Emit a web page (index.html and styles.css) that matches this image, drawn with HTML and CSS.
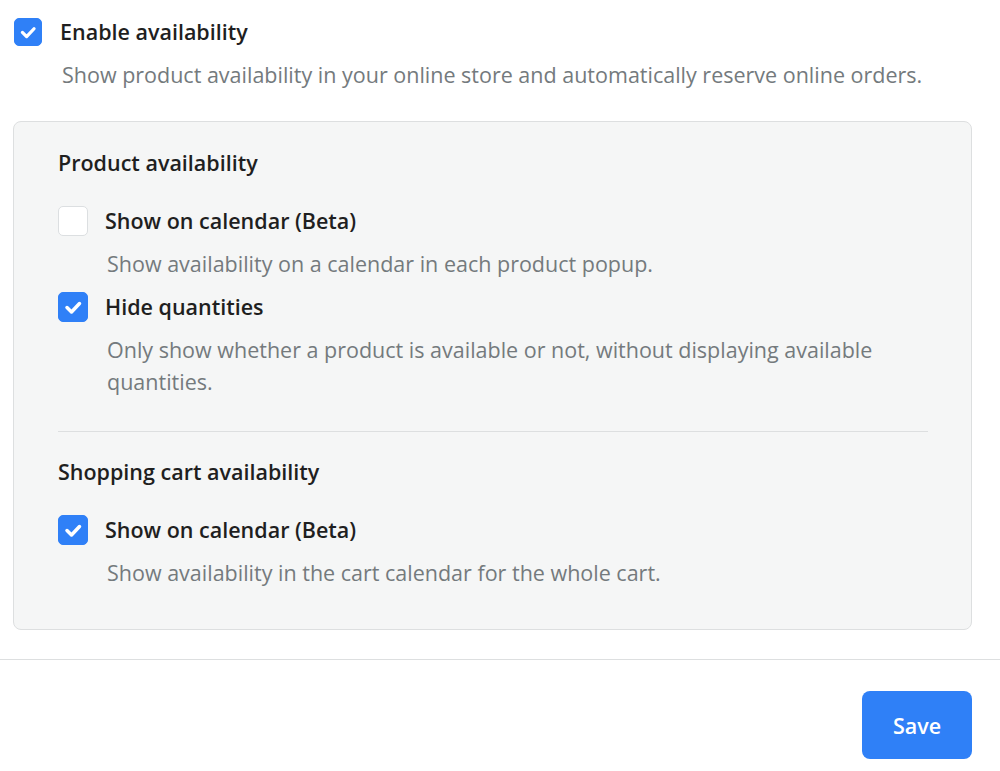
FILE: index.html
```html
<!DOCTYPE html>
<html>
<head>
<meta charset="utf-8">
<link rel="stylesheet" href="styles.css">
</head>
<body>
<div class="page">
  <div class="option top">
    <span class="cb checked"><svg viewBox="0 0 28 28"><path d="M8 14.5l4.5 4.5 8-8.5" /></svg></span>
    <div class="opt-text">
      <div class="label">Enable availability</div>
      <div class="desc">Show product availability in your online store and automatically reserve online orders.</div>
    </div>
  </div>
  <div class="panel">
    <div class="section">
      <div class="heading">Product availability</div>
      <div class="option">
        <span class="cb"></span>
        <div class="opt-text">
          <div class="label">Show on calendar (Beta)</div>
          <div class="desc">Show availability on a calendar in each product popup.</div>
        </div>
      </div>
      <div class="option">
        <span class="cb checked"><svg viewBox="0 0 28 28"><path d="M8 14.5l4.5 4.5 8-8.5" /></svg></span>
        <div class="opt-text">
          <div class="label">Hide quantities</div>
          <div class="desc">Only show whether a product is available or not, without displaying available quantities.</div>
        </div>
      </div>
    </div>
    <div class="divider"></div>
    <div class="section">
      <div class="heading">Shopping cart availability</div>
      <div class="option">
        <span class="cb checked"><svg viewBox="0 0 28 28"><path d="M8 14.5l4.5 4.5 8-8.5" /></svg></span>
        <div class="opt-text">
          <div class="label">Show on calendar (Beta)</div>
          <div class="desc">Show availability in the cart calendar for the whole cart.</div>
        </div>
      </div>
    </div>
  </div>
</div>
<div class="footer">
  <button class="save">Save</button>
</div>
</body>
</html>
```
FILE: styles.css
```css
html, body {
  margin: 0;
  padding: 0;
  background: #ffffff;
  font-family: "Open Sans", Lato, sans-serif;
  color: #1b1b1b;
}
.page {
  padding: 18px 28px 0 13px;
}
.option {
  display: flex;
  align-items: flex-start;
  gap: 17px;
}
.option.top {
  padding-left: 1px;
  gap: 18px;
}
.option.top .cb {
  width: 28px;
  height: 28px;
}
.option.top .label {
  line-height: 28px;
}
.option.top .desc {
  margin-top: 13px;
}
.cb {
  flex: 0 0 auto;
  width: 30px;
  height: 30px;
  box-sizing: border-box;
  border-radius: 5px;
  border: 1px solid #dcdfe1;
  background: #ffffff;
  display: flex;
  align-items: center;
  justify-content: center;
}
.cb.checked {
  background: #2f80f7;
  border-color: #2f80f7;
}
.cb svg {
  width: 28px;
  height: 28px;
}
.cb path {
  fill: none;
  stroke: #ffffff;
  stroke-width: 3.5;
  stroke-linecap: round;
  stroke-linejoin: round;
}
.label {
  font-size: 21.5px;
  font-weight: 600;
  line-height: 30px;
  color: #1f1f1f;
}
.desc {
  font-size: 21.5px;
  line-height: 32px;
  color: #747a7d;
  margin-top: 12px;
  padding-left: 2px;
}
.panel {
  margin-top: 30px;
  background: #f5f6f6;
  border: 1px solid #dddfe0;
  border-radius: 8px;
  padding: 26px 43px 40px 44px;
}
.heading {
  font-size: 21.5px;
  font-weight: 600;
  line-height: 30px;
  color: #1f1f1f;
  margin-bottom: 28px;
}
.section .option + .option {
  margin-top: 12px;
}
.divider {
  height: 1px;
  background: #dddfe0;
  margin: 33px 0 25px;
}
.footer {
  margin-top: 29px;
  border-top: 1px solid #dddfe0;
  display: flex;
  justify-content: flex-end;
  padding: 31px 28px 0 0;
}
.save {
  width: 110px;
  height: 68px;
  border: none;
  border-radius: 8px;
  background: #2f80f7;
  color: #ffffff;
  font-family: "Open Sans", Lato, sans-serif;
  font-size: 21.5px;
  font-weight: 600;
}
```
